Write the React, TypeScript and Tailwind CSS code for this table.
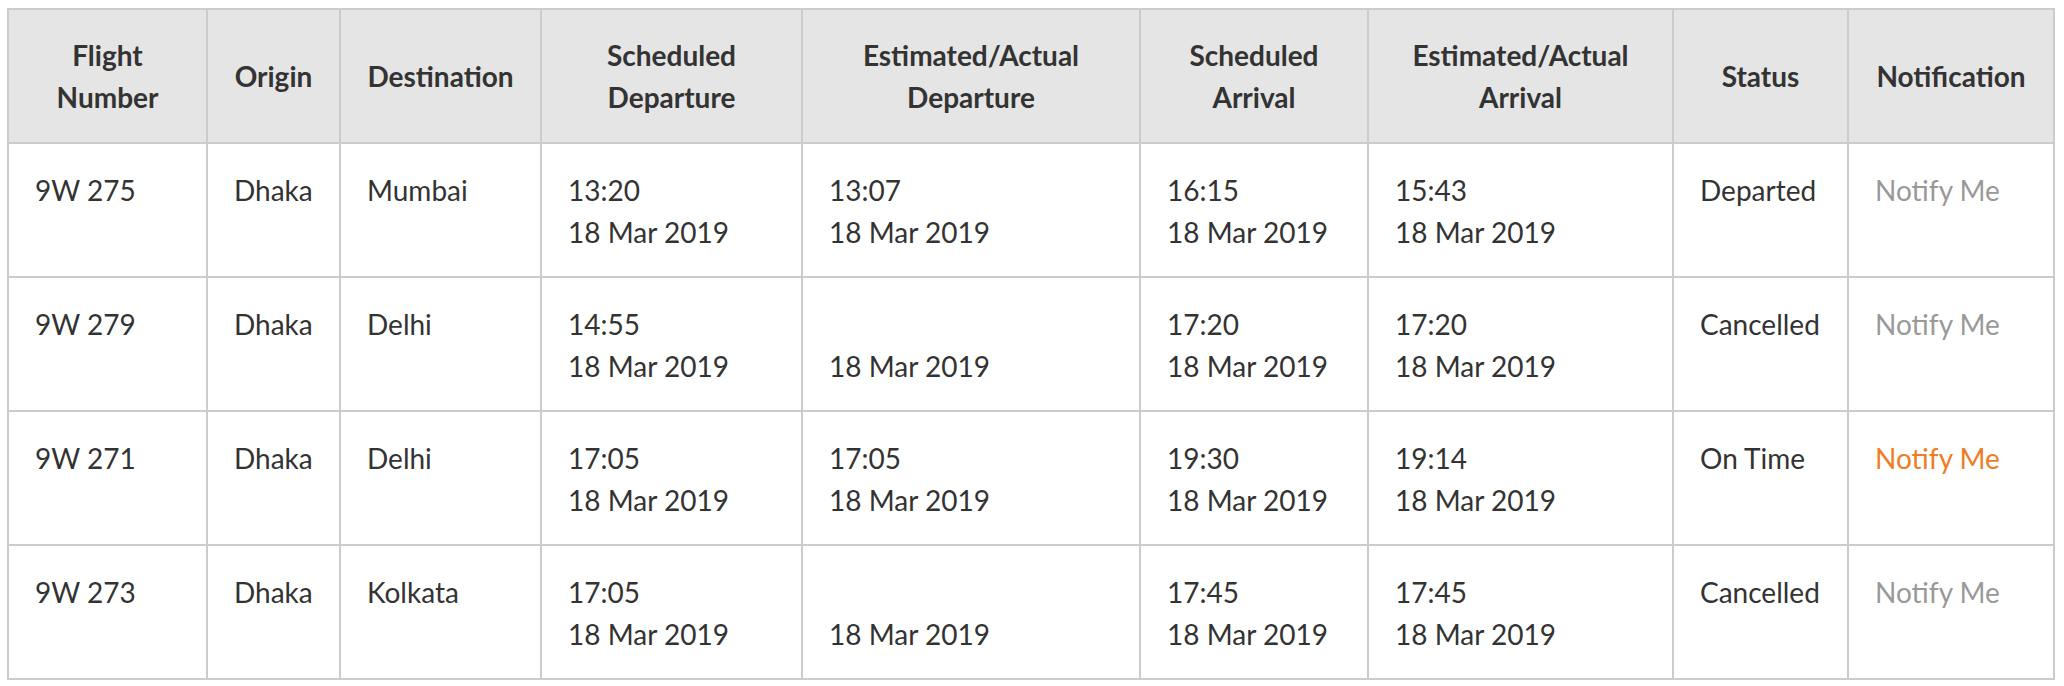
import React from "react";

type Row = {
  flight: string;
  origin: string;
  dest: string;
  schedDep: [string, string];
  estDep: [string, string];
  schedArr: [string, string];
  estArr: [string, string];
  status: string;
  active: boolean;
};

const rows: Row[] = [
  { flight: "9W 275", origin: "Dhaka", dest: "Mumbai", schedDep: ["13:20", "18 Mar 2019"], estDep: ["13:07", "18 Mar 2019"], schedArr: ["16:15", "18 Mar 2019"], estArr: ["15:43", "18 Mar 2019"], status: "Departed", active: false },
  { flight: "9W 279", origin: "Dhaka", dest: "Delhi", schedDep: ["14:55", "18 Mar 2019"], estDep: ["", "18 Mar 2019"], schedArr: ["17:20", "18 Mar 2019"], estArr: ["17:20", "18 Mar 2019"], status: "Cancelled", active: false },
  { flight: "9W 271", origin: "Dhaka", dest: "Delhi", schedDep: ["17:05", "18 Mar 2019"], estDep: ["17:05", "18 Mar 2019"], schedArr: ["19:30", "18 Mar 2019"], estArr: ["19:14", "18 Mar 2019"], status: "On Time", active: true },
  { flight: "9W 273", origin: "Dhaka", dest: "Kolkata", schedDep: ["17:05", "18 Mar 2019"], estDep: ["", "18 Mar 2019"], schedArr: ["17:45", "18 Mar 2019"], estArr: ["17:45", "18 Mar 2019"], status: "Cancelled", active: false },
];

const th = "border-2 border-[#cccccc] px-[20px] py-[24px] text-center align-middle font-bold";
const td = "border-2 border-[#cccccc] px-[26px] pt-[25px] pb-[23px] text-left align-top";

function Two({ v }: { v: [string, string] }) {
  return (
    <>
      <div>{v[0] === "" ? "\u00a0" : v[0]}</div>
      <div>{v[1]}</div>
    </>
  );
}

export default function App() {
  return (
    <div className="bg-white w-[2064px] h-[686px] pl-[7px] pt-[8px]" style={{ fontFamily: "Lato, 'Open Sans', sans-serif" }}>
      <table className="table-fixed border-collapse w-[2048px] text-[28px] leading-[42px] text-[#333333]">
        <colgroup>
          <col className="w-[199px]" />
          <col className="w-[133px]" />
          <col className="w-[201px]" />
          <col className="w-[261px]" />
          <col className="w-[338px]" />
          <col className="w-[228px]" />
          <col className="w-[305px]" />
          <col className="w-[175px]" />
          <col className="w-[206px]" />
        </colgroup>
        <thead>
          <tr className="bg-[#e5e5e5]">
            <th className={th}>Flight<br />Number</th>
            <th className={th}>Origin</th>
            <th className={th}>Destination</th>
            <th className={th}>Scheduled<br />Departure</th>
            <th className={th}>Estimated/Actual<br />Departure</th>
            <th className={th}>Scheduled<br />Arrival</th>
            <th className={th}>Estimated/Actual<br />Arrival</th>
            <th className={th}>Status</th>
            <th className={th}>Notification</th>
          </tr>
        </thead>
        <tbody>
          {rows.map((r) => (
            <tr key={r.flight} className="bg-white">
              <td className={td}>{r.flight}</td>
              <td className={td}>{r.origin}</td>
              <td className={td}>{r.dest}</td>
              <td className={td}><Two v={r.schedDep} /></td>
              <td className={td}><Two v={r.estDep} /></td>
              <td className={td}><Two v={r.schedArr} /></td>
              <td className={td}><Two v={r.estArr} /></td>
              <td className={td}>{r.status}</td>
              <td className={td}>
                <span className={r.active ? "text-[#ee7d24]" : "text-[#999999]"}>Notify Me</span>
              </td>
            </tr>
          ))}
        </tbody>
      </table>
    </div>
  );
}
